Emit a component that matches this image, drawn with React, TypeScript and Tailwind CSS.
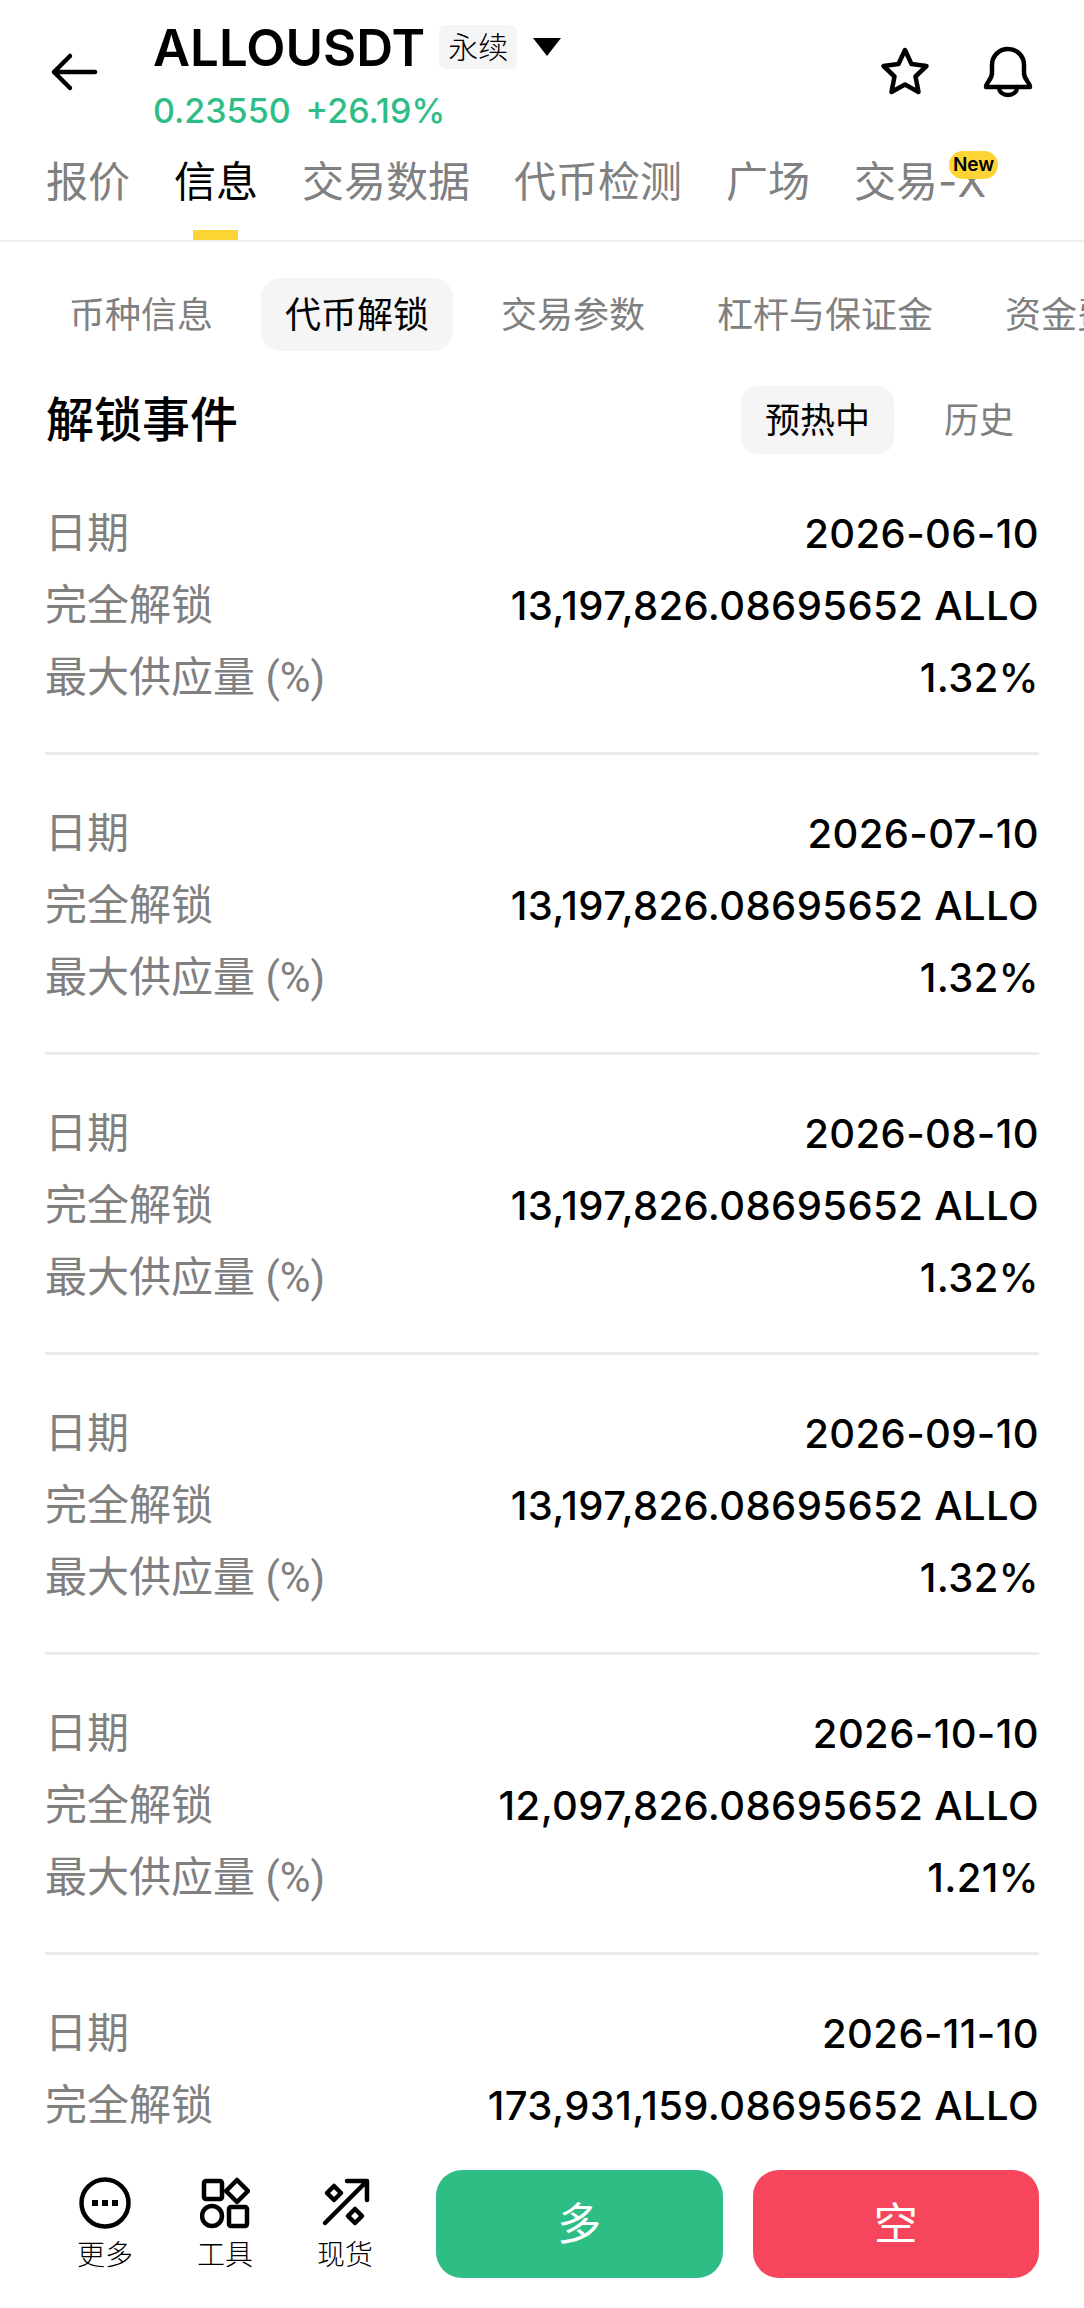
import React from 'react';

const SANS = "font-['Inter','Noto_Sans_CJK_SC',sans-serif]";

const mainTabs = ['报价', '信息', '交易数据', '代币检测', '广场', '交易-X'];
const subTabs = ['币种信息', '代币解锁', '交易参数', '杠杆与保证金', '资金费率'];

const events = [
  { date: '2026-06-10', amount: '13,197,826.08695652 ALLO', pct: '1.32%' },
  { date: '2026-07-10', amount: '13,197,826.08695652 ALLO', pct: '1.32%' },
  { date: '2026-08-10', amount: '13,197,826.08695652 ALLO', pct: '1.32%' },
  { date: '2026-09-10', amount: '13,197,826.08695652 ALLO', pct: '1.32%' },
  { date: '2026-10-10', amount: '12,097,826.08695652 ALLO', pct: '1.21%' },
  { date: '2026-11-10', amount: '173,931,159.08695652 ALLO' },
];

const Row = ({ label, value }: { label: string; value: string }) => (
  <div className="flex h-[72px] items-center justify-between">
    <span className="-mt-[2px] font-['Roboto','Noto_Sans_CJK_SC',sans-serif] text-[42px] text-[#808080]">{label}</span>
    <span className="text-[40px] font-medium tracking-[0.4px] text-black">{value}</span>
  </div>
);

const Header = () => (
  <header className="shrink-0 border-b-2 border-[#eeeeee]">
    <div className="flex h-[144px] pl-[50px] pr-[51px]">
      <svg width="50" height="40" viewBox="0 0 50 40" fill="none" stroke="black" strokeWidth="4.5" strokeLinecap="round" strokeLinejoin="round" className="mt-[52px]">
        <path d="M4 20H45M20 4L4 20L20 36" />
      </svg>
      <div className="ml-[53px] flex-1">
        <div className="flex h-[94px] items-center">
          <span className="text-[51px] font-semibold leading-none text-black">ALLOUSDT</span>
          <span className="ml-[14px] flex h-[44px] w-[78px] items-center justify-center rounded-md bg-[#f5f5f5] text-[30px] font-light text-black">永续</span>
          <svg width="28" height="18" viewBox="0 0 28 18" className="ml-[16px]">
            <path d="M0 0H28L14 18Z" fill="black" />
          </svg>
        </div>
        <div className="flex gap-[15px] text-[34px] font-medium leading-none text-[#2ebd85]">
          <span>0.23550</span>
          <span>+26.19%</span>
        </div>
      </div>
      <div className="mt-[46px] flex items-start gap-[53px]">
        <svg width="50" height="50" viewBox="0 0 50 50" fill="none" stroke="black" strokeWidth="4.5" strokeLinejoin="round">
          <path d="M25 4L31.5 18L46.5 20L35.5 30.5L38.5 46L25 38.5L11.5 46L14.5 30.5L3.5 20L18.5 18Z" />
        </svg>
        <svg width="50" height="52" viewBox="0 0 50 52" fill="none" stroke="black" strokeWidth="4.5" strokeLinecap="round" strokeLinejoin="round">
          <path d="M3 41C3 36 9 34 9 27V19C9 10 16 3 25 3S41 10 41 19V27C41 34 47 36 47 41Z" />
          <path d="M16 41C16 46 20 49 25 49S34 46 34 41" />
        </svg>
      </div>
    </div>
    <div className="flex h-[96px] gap-[44px] px-[46px]">
      {mainTabs.map((tab) => (
        <div key={tab} className="relative flex h-full items-start">
          <span className={`text-[42px] leading-[76px] ${tab === '信息' ? 'text-black' : 'text-[#808080]'}`}>{tab}</span>
          {tab === '信息' && <div className="absolute bottom-0 left-[19px] h-[10px] w-[45px] bg-[#fcd535]" />}
          {tab === '交易-X' && (
            <span className="absolute right-[-12px] top-[7px] flex h-[28px] w-[49px] items-center justify-center rounded-full bg-[#fcd535] text-[19px] font-semibold text-black">New</span>
          )}
        </div>
      ))}
    </div>
  </header>
);

const BottomBar = () => (
  <footer className="flex h-[168px] shrink-0 bg-white px-[45px] pt-[30px]">
    <div className="flex w-[391px] pt-[7px]">
      <div className="flex w-[120px] flex-col items-center">
        <svg width="52" height="52" viewBox="0 0 52 52" fill="none" stroke="black" strokeWidth="4.5">
          <circle cx="26" cy="26" r="23.5" />
          <path d="M13 26H19M23 26H29M33 26H39" strokeWidth="6" />
        </svg>
        <span className="text-[28px] font-light leading-[52px] text-black">更多</span>
      </div>
      <div className="flex w-[120px] flex-col items-center">
        <svg width="50" height="52" viewBox="0 0 50 52" fill="none" stroke="black" strokeWidth="4.5" strokeLinejoin="round">
          <rect x="4" y="4" width="18" height="18" rx="2" />
          <path d="M37 3L48 14L37 25L26 14Z" />
          <circle cx="12" cy="39" r="10" />
          <rect x="29" y="30" width="18" height="19" rx="2" />
        </svg>
        <span className="text-[28px] font-light leading-[52px] text-black">工具</span>
      </div>
      <div className="flex w-[120px] flex-col items-center">
        <svg width="50" height="52" viewBox="0 0 50 52" fill="none" stroke="black" strokeWidth="4.5" strokeLinecap="round" strokeLinejoin="round">
          <path d="M5 46L45 6M27 4H47V23" />
          <path d="M14 9L21 16L14 23L7 16Z" />
          <path d="M35 32L42 39L35 46L28 39Z" />
        </svg>
        <span className="text-[28px] font-light leading-[52px] text-black">现货</span>
      </div>
    </div>
    <div className="flex h-[108px] flex-1 gap-[30px]">
      <button className="flex-1 rounded-[26px] bg-[#2ebd85] text-[44px] text-white">多</button>
      <button className="flex-1 rounded-[26px] bg-[#f6465d] text-[44px] text-white">空</button>
    </div>
  </footer>
);

export default function App() {
  return (
    <div className={`flex h-[2308px] w-[1084px] flex-col overflow-hidden bg-white ${SANS}`}>
      <Header />
      <main className="min-h-0 flex-1 overflow-hidden">
        <div className="flex gap-[24px] overflow-hidden whitespace-nowrap pl-[45px] pt-[36px]">
          {subTabs.map((tab) => (
            <span
              key={tab}
              className={`flex h-[73px] shrink-0 items-center rounded-[20px] px-[24px] text-[36px] ${tab === '代币解锁' ? 'bg-[#f5f5f5] text-black' : 'text-[#808080]'}`}
            >
              {tab}
            </span>
          ))}
        </div>
        <div className="mt-[33px] flex items-center justify-between px-[46px]">
          <h2 className="text-[48px] font-medium text-black">解锁事件</h2>
          <div className="flex items-center gap-[26px]">
            <span className="flex h-[68px] items-center rounded-[16px] bg-[#f5f5f5] px-[24px] text-[35px] text-black">预热中</span>
            <span className="flex h-[68px] items-center px-[24px] text-[35px] text-[#808080]">历史</span>
          </div>
        </div>
        <div className="mt-[1px] px-[45px]">
          {events.map((e) => (
            <div key={e.date} className={e.pct ? 'border-b-[3px] border-[#ebebeb] pb-[38px] pt-[43px] first:pt-[41px]' : 'pt-[43px]'}>
              <Row label="日期" value={e.date} />
              <Row label="完全解锁" value={e.amount} />
              {e.pct && <Row label="最大供应量 (%)" value={e.pct} />}
            </div>
          ))}
        </div>
      </main>
      <BottomBar />
    </div>
  );
}
